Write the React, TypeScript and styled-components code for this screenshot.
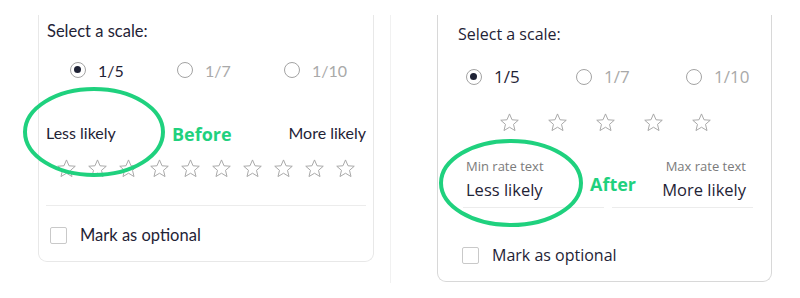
import styled, { createGlobalStyle } from "styled-components"

const GlobalStyle = createGlobalStyle`
  * { box-sizing: border-box; }
  html, body { margin: 0; padding: 0; background: #ffffff; }
  body { width: 800px; height: 298px; overflow: hidden; }
`

const GREEN = "#1fd17e"
const INK = "#1f2336"

const Page = styled.div`
  display: flex;
  align-items: flex-start;
  padding-top: 15px;
  width: 800px;
  height: 298px;
`

// "Before" screenshot frame, with its faint right edge
const BeforePanel = styled.div`
  position: relative;
  width: 391px;
  height: 268px;
  padding-left: 38px;
  border-right: 1px solid #f1f1f1;
`

const AfterPanel = styled.div`
  position: relative;
  padding-left: 46px;
`

const Card = styled.div<{ $w: number; $h: number; $edge: string; $font: string }>`
  width: ${(p) => p.$w}px;
  height: ${(p) => p.$h}px;
  border: 1px solid ${(p) => p.$edge};
  border-top: none;
  border-radius: 0 0 9px 9px;
  font-family: ${(p) => p.$font};
  color: ${INK};
  background: #fff;
`

const BeforeBody = styled.div`
  padding: 6px 7px 0 7px;
`

const AfterBody = styled.div`
  padding: 9px 18px 0 20px;
`

const Title = styled.div<{ $size: number; $indent: number }>`
  font-size: ${(p) => p.$size}px;
  line-height: 20px;
  padding-left: ${(p) => p.$indent}px;
`

const RadioRow = styled.div<{ $top: number; $indent: number; $col: number }>`
  display: grid;
  grid-template-columns: repeat(3, ${(p) => p.$col}px);
  margin-top: ${(p) => p.$top}px;
  padding-left: ${(p) => p.$indent}px;
  height: 20px;
`

const RadioOption = styled.label<{ $on?: boolean; $size: number }>`
  display: flex;
  align-items: center;
  gap: 12px;
  font-size: ${(p) => p.$size}px;
  color: ${(p) => (p.$on ? INK : "#a9a9a9")};
`

const RadioDot = styled.span<{ $on?: boolean }>`
  position: relative;
  width: 16px;
  height: 16px;
  flex: none;
  border-radius: 50%;
  border: 1.5px solid #a3a3a3;

  &::after {
    content: "";
    display: ${(p) => (p.$on ? "block" : "none")};
    position: absolute;
    left: 3px;
    top: 3px;
    width: 7px;
    height: 7px;
    border-radius: 50%;
    background: ${INK};
  }
`

const LikelyRow = styled.div`
  display: flex;
  justify-content: space-between;
  align-items: center;
  margin-top: 42px;
  height: 20px;
  font-size: 16px;
`

const StarRow = styled.div<{ $top: number; $gap: number }>`
  display: flex;
  justify-content: center;
  gap: ${(p) => p.$gap}px;
  margin-top: ${(p) => p.$top}px;
  height: 21px;
`

const Divider = styled.div`
  height: 1px;
  margin-top: 26px;
  background: #ececec;
`

const CheckRow = styled.div<{ $top: number; $size: number }>`
  display: flex;
  align-items: center;
  gap: 13px;
  margin-top: ${(p) => p.$top}px;
  padding-left: 4px;
  height: 18px;
  font-size: ${(p) => p.$size}px;
`

const CheckBox = styled.span`
  width: 17px;
  height: 17px;
  flex: none;
  border: 1.5px solid #c9c9c9;
  border-radius: 2px;
`

const RateInputs = styled.div`
  display: grid;
  grid-template-columns: 1fr 1fr;
  gap: 8px;
  margin: 25px 0 0 5px;
`

const RateField = styled.div<{ $right?: boolean }>`
  display: flex;
  flex-direction: column;
  align-items: ${(p) => (p.$right ? "flex-end" : "flex-start")};
  padding: 0 7px 6px 3px;
  border-bottom: 1px solid #ececec;
`

const RateLabel = styled.span`
  font-size: 13px;
  line-height: 16px;
  color: #7b7b7b;
`

const RateValue = styled.span`
  margin-top: 5px;
  font-size: 16.5px;
  line-height: 22px;
  color: ${INK};
`

// annotation overlays
const Ring = styled.svg`
  position: absolute;
  overflow: visible;
  pointer-events: none;
`

const Note = styled.span`
  position: absolute;
  font-family: "Open Sans", "Noto Sans", sans-serif;
  font-weight: 700;
  font-size: 18px;
  line-height: 24px;
  color: ${GREEN};
`

function StarIcon() {
  return (
    <svg width="21" height="21" viewBox="0 0 24 24">
      <polygon
        points="12,2.2 14.9,8.9 22,9.4 16.6,14.1 18.3,21.2 12,17.4 5.7,21.2 7.4,14.1 2,9.4 9.1,8.9"
        fill="none"
        stroke="#a6a6a6"
        strokeWidth="1.1"
        strokeLinejoin="round"
      />
    </svg>
  )
}

function Ellipse({ cx, cy, rx, ry }: { cx: number; cy: number; rx: number; ry: number }) {
  return (
    <Ring
      width={rx * 2}
      height={ry * 2}
      style={{ left: cx - rx, top: cy - ry }}
    >
      <ellipse cx={rx} cy={ry} rx={rx} ry={ry} fill="none" stroke={GREEN} strokeWidth="4" />
    </Ring>
  )
}

const SCALES = ["1/5", "1/7", "1/10"]

export default function App() {
  const beforeFont = '"Lato", "Noto Sans", sans-serif'
  const afterFont = '"Open Sans", "Noto Sans", sans-serif'

  return (
    <>
      <GlobalStyle />
      <Page>
        {/* 기존 화면 */}
        <BeforePanel>
          <Card $w={336} $h={247} $edge="#e8e8e8" $font={beforeFont}>
            <BeforeBody>
              <Title $size={16.5} $indent={1}>Select a scale:</Title>
              <RadioRow $top={19} $indent={24} $col={107}>
                {SCALES.map((s, i) => (
                  <RadioOption key={s} $on={i === 0} $size={16}>
                    <RadioDot $on={i === 0} />
                    {s}
                  </RadioOption>
                ))}
              </RadioRow>
              <LikelyRow>
                <span>Less likely</span>
                <span>More likely</span>
              </LikelyRow>
              <StarRow $top={16} $gap={10}>
                {Array.from({ length: 10 }).map((_, i) => (
                  <StarIcon key={i} />
                ))}
              </StarRow>
              <Divider />
              <CheckRow $top={20} $size={16.5}>
                <CheckBox />
                Mark as optional
              </CheckRow>
            </BeforeBody>
          </Card>
          <Ellipse cx={94} cy={117} rx={69} ry={43} />
          <Note style={{ left: 172, top: 107 }}>Before</Note>
        </BeforePanel>

        {/* 바뀐 화면 */}
        <AfterPanel>
          <Card $w={335} $h={267} $edge="#d8d8d8" $font={afterFont}>
            <AfterBody>
              <Title $size={16} $indent={0}>Select a scale:</Title>
              <RadioRow $top={21} $indent={8} $col={110}>
                {SCALES.map((s, i) => (
                  <RadioOption key={s} $on={i === 0} $size={17}>
                    <RadioDot $on={i === 0} />
                    {s}
                  </RadioOption>
                ))}
              </RadioRow>
              <StarRow $top={27} $gap={27}>
                {Array.from({ length: 5 }).map((_, i) => (
                  <StarIcon key={i} />
                ))}
              </StarRow>
              <RateInputs>
                <RateField>
                  <RateLabel>Min rate text</RateLabel>
                  <RateValue>Less likely</RateValue>
                </RateField>
                <RateField $right>
                  <RateLabel>Max rate text</RateLabel>
                  <RateValue>More likely</RateValue>
                </RateField>
              </RateInputs>
              <CheckRow $top={38} $size={16}>
                <CheckBox />
                Mark as optional
              </CheckRow>
            </AfterBody>
          </Card>
          <Ellipse cx={120} cy={168} rx={70} ry={42} />
          <Note style={{ left: 199, top: 157 }}>After</Note>
        </AfterPanel>
      </Page>
    </>
  )
}
